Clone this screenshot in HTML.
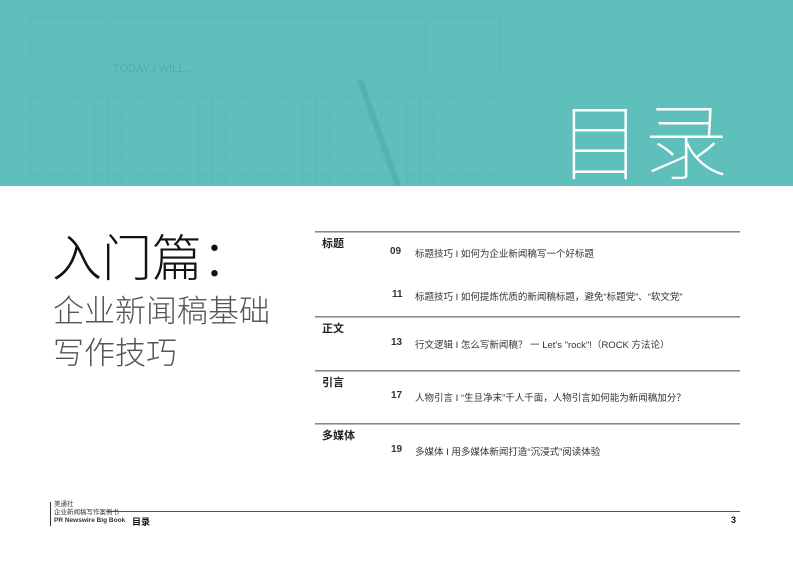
<!DOCTYPE html>
<html><head><meta charset="utf-8"><style>
*{margin:0;padding:0}
body{width:793px;height:561px;background:#fff;position:relative;overflow:hidden;font-family:"Liberation Sans","Noto Sans CJK SC",sans-serif}
.a{position:absolute;white-space:nowrap}
.hd{position:absolute;left:0;top:0;width:793px;height:186px;background:#5fbfbb;overflow:hidden}
.ln{position:absolute;left:315px;width:425px;height:1px;background:#888;border-bottom:1px solid #bbb}
.sec{font-size:11px;font-weight:bold;color:#222}
.num{font-size:10px;font-weight:bold;color:#333}
.t{font-size:9.5px;color:#333}
</style></head><body>
<div class="hd">
<svg width="793" height="186" style="position:absolute;left:0;top:0">
<g stroke="#5cbab6" stroke-width="1" fill="none">
<rect x="30" y="17" width="470" height="60"/>
<line x1="30" y1="48" x2="500" y2="48"/><line x1="107" y1="17" x2="107" y2="77"/><line x1="425" y1="17" x2="425" y2="77"/>
<rect x="30" y="97" width="472" height="95"/>
<path d="M30 110H502M30 123H502M30 136H502M30 149H502M30 162H502M30 175H502"/>
<path d="M43 97V186M56 97V186M69 97V186M82 97V186M95 97V186M108 97V186M121 97V186M134 97V186M147 97V186M160 97V186M173 97V186M186 97V186M199 97V186M212 97V186M225 97V186M238 97V186M251 97V186M264 97V186M277 97V186M290 97V186M303 97V186M316 97V186M329 97V186M342 97V186M355 97V186M368 97V186M381 97V186M394 97V186M407 97V186M420 97V186M433 97V186M446 97V186M459 97V186M472 97V186M485 97V186"/>
</g>
<line x1="360" y1="80" x2="398" y2="186" stroke="#56b2ae" stroke-width="6"/>
<text x="113" y="72" font-size="11" fill="#54aaa6" font-family="Liberation Sans">TODAY I WILL...</text>
</svg>
<div class="a" style="left:558px;top:88px;font-size:84px;line-height:100px;color:#fff;font-weight:100;font-family:'Noto Sans CJK SC',sans-serif;letter-spacing:2px">目录</div>
</div>
<div class="a" style="left:52px;top:222px;font-size:50px;line-height:66px;color:#111;font-family:'Noto Sans CJK SC',sans-serif;font-weight:300">入门篇：</div>
<div class="a" style="left:53px;top:288px;font-size:31px;line-height:42px;color:#555;font-family:'Noto Sans CJK SC',sans-serif;font-weight:300">企业新闻稿基础<br>写作技巧</div>
<div class="ln" style="top:231px"></div>
<div class="ln" style="top:316px"></div>
<div class="ln" style="top:370px"></div>
<div class="ln" style="top:423px"></div>
<div class="a sec" style="left:322px;top:235px">标题</div>
<div class="a sec" style="left:322px;top:320px">正文</div>
<div class="a sec" style="left:322px;top:374px">引言</div>
<div class="a sec" style="left:322px;top:427px">多媒体</div>
<div class="a num" style="left:390px;top:246px">09</div><div class="a t" style="left:415px;top:246px">标题技巧 I 如何为企业新闻稿写一个好标题</div>
<div class="a num" style="left:392px;top:289px">11</div><div class="a t" style="left:415px;top:289px">标题技巧 I 如何提炼优质的新闻稿标题，避免“标题党”、“软文党”</div>
<div class="a num" style="left:391px;top:337px">13</div><div class="a t" style="left:415px;top:337px">行文逻辑 I 怎么写新闻稿？ 一 Let's "rock"!（ROCK 方法论）</div>
<div class="a num" style="left:391px;top:390px">17</div><div class="a t" style="left:415px;top:390px">人物引言 I “生旦净末”千人千面，人物引言如何能为新闻稿加分？</div>
<div class="a num" style="left:391px;top:444px">19</div><div class="a t" style="left:415px;top:444px">多媒体 I 用多媒体新闻打造“沉浸式”阅读体验</div>
<div class="a" style="left:50px;top:502px;width:1px;height:24px;background:#333"></div>
<div class="a" style="left:54px;top:501px;font-size:6.5px;line-height:8px;color:#333">美通社<br>企业新闻稿写作案例书<br><b>PR Newswire Big Book</b></div>
<div class="a" style="left:106px;top:511px;width:634px;height:1px;background:#555"></div>
<div class="a" style="left:132px;top:515px;font-size:9px;font-weight:bold;color:#111">目录</div>
<div class="a" style="left:731px;top:515px;font-size:9px;font-weight:bold;color:#111">3</div>
</body></html>
